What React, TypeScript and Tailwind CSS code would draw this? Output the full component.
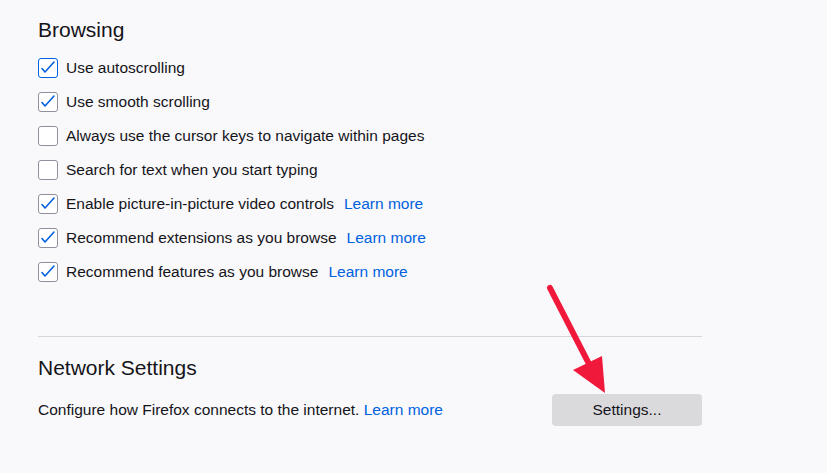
const rows = [
  { label: "Use autoscrolling", checked: true, focused: true },
  { label: "Use smooth scrolling", checked: true },
  { label: "Always use the cursor keys to navigate within pages", checked: false },
  { label: "Search for text when you start typing", checked: false },
  { label: "Enable picture-in-picture video controls", checked: true, learn: true },
  { label: "Recommend extensions as you browse", checked: true, learn: true },
  { label: "Recommend features as you browse", checked: true, learn: true },
];

function Checkbox({ checked, focused }: { checked: boolean; focused?: boolean }) {
  return (
    <div
      className={`w-5 h-5 shrink-0 rounded-[3px] border bg-white flex items-center justify-center ${
        focused ? "border-[#0061e0]" : "border-[#8f8f9d]"
      }`}
    >
      {checked && (
        <svg width="20" height="20" viewBox="0 0 20 20" className="-m-px">
          <polyline
            points="4,10.5 7,14 16,4"
            fill="none"
            stroke="#0061e0"
            strokeWidth="1.6"
            strokeLinecap="round"
            strokeLinejoin="round"
          />
        </svg>
      )}
    </div>
  );
}

export default function App() {
  return (
    <div
      className="relative w-[827px] h-[473px] bg-[#f9f9fb] text-[#15141a] overflow-hidden"
      style={{ fontFamily: '"Liberation Sans", Arial, sans-serif' }}
    >
      <div className="w-[664px] ml-[38px] pt-[16px]">
        {/* Browsing */}
        <h1 className="text-[21px] leading-[28px] font-normal">Browsing</h1>
        <div className="mt-[14px] flex flex-col gap-[14px]">
          {rows.map((r) => (
            <div key={r.label} className="flex items-center h-5 text-[15.5px]">
              <Checkbox checked={r.checked} focused={r.focused} />
              <span className="ml-2">{r.label}</span>
              {r.learn && <a className="ml-[10px] text-[#0061e0]">Learn more</a>}
            </div>
          ))}
        </div>

        <div className="mt-[54px] border-t border-[#d7d7db]" />

        {/* Network Settings */}
        <h2 className="mt-[17px] text-[21px] leading-[28px] font-normal">Network Settings</h2>
        <div className="mt-[12px] flex items-center justify-between text-[15.5px]">
          <span>
            Configure how Firefox connects to the internet.{" "}
            <a className="text-[#0061e0]">Learn more</a>
          </span>
          <button className="w-[150px] h-[32px] rounded-[4px] bg-[#dadadd] text-[15.5px] text-[#15141a]">
            Settings...
          </button>
        </div>
      </div>

      {/* annotation arrow */}
      <svg className="absolute left-0 top-0 pointer-events-none" width="827" height="473">
        <line x1="550" y1="288" x2="588" y2="362" stroke="#f0193c" strokeWidth="6" strokeLinecap="round" />
        <polygon points="573,370 602,356 605,393" fill="#f0193c" />
      </svg>
    </div>
  );
}
